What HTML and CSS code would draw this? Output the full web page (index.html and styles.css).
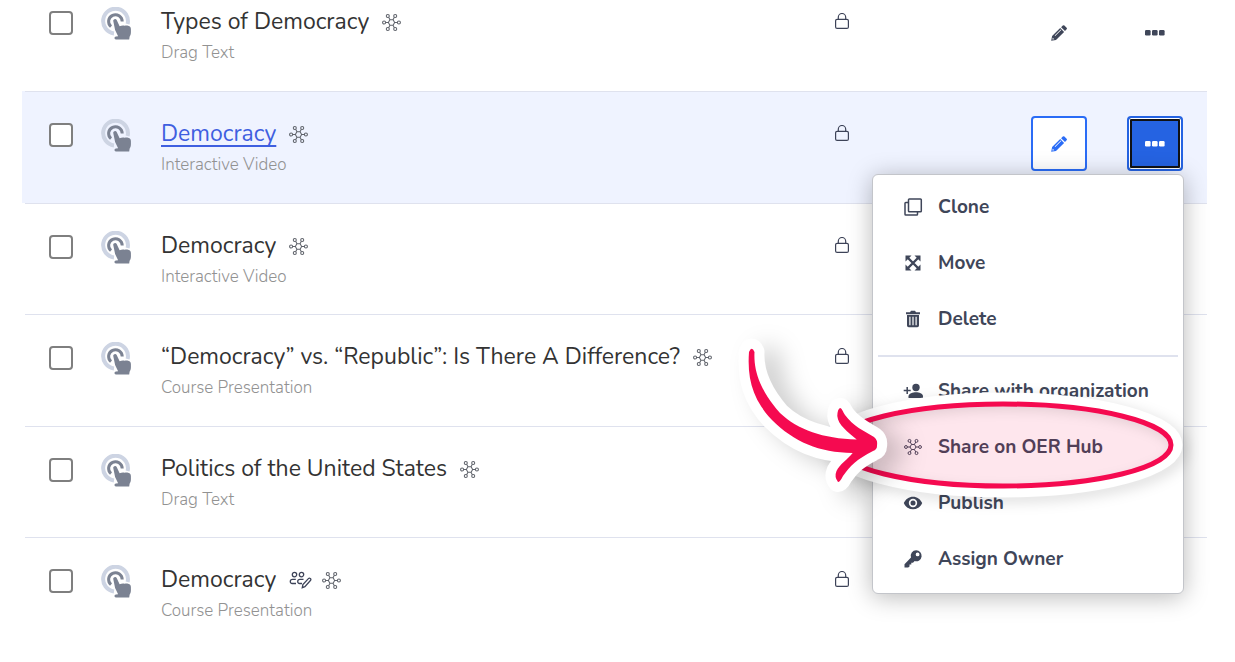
FILE: index.html
```html
<!DOCTYPE html>
<html lang="en">
<head>
    <meta charset="UTF-8">
    <meta name="viewport" content="width=device-width, initial-scale=1.0">
    <title>Content</title>
    <link rel="stylesheet" href="styles.css">
</head>
<body>
    <!-- Shared icons -->
    <svg class="sprite" aria-hidden="true">
        <symbol id="touch" viewBox="0 0 32 34">
            <path d="M13 26.4A12.4 12.4 0 1 1 26.6 17" fill="none" stroke="#cdd4e3" stroke-width="4"/>
            <path d="M10 19.7A6.8 6.8 0 1 1 21.2 14.6" fill="none" stroke="#7b8292" stroke-width="3"/>
            <path d="M12.3 14.2c-.6-2 2.5-3.200 3.400-1.200l2.900 6.200c2-.7 3.600-.9 5-.4 2.300-.5 6.300-.3 6.300 3.200 0 3.600.4 5.400-1.300 7.800l-.4 2.800H14.900c-1.900-.3-1.900-2.700 0-3l2.200-.3-3-6.300z" fill="#7b8292"/>
        </symbol>
        <symbol id="hub" viewBox="0 0 20 20">
            <g fill="none" stroke="currentColor" stroke-width="1.1">
                <path d="M3.800 10h3M13.200 10h3M6.900 4.500l1.600 2.700M13.100 4.500l-1.600 2.700M6.900 15.500l1.600-2.700M13.100 15.500l-1.600-2.700"/>
                <path d="M8.300 7.200h3.400L13.300 10l-1.600 2.800H8.300L6.700 10z"/>
                <circle cx="2.200" cy="10" r="1.600"/>
                <circle cx="17.800" cy="10" r="1.600"/>
                <circle cx="6.100" cy="3.200" r="1.600"/>
                <circle cx="13.900" cy="3.200" r="1.600"/>
                <circle cx="6.100" cy="16.800" r="1.600"/>
                <circle cx="13.900" cy="16.800" r="1.600"/>
            </g>
        </symbol>
        <symbol id="lock" viewBox="0 0 14 16">
            <path d="M3.300 6.300V4.200a3.700 3.700 0 0 1 7.400 0v2.100" fill="none" stroke="currentColor" stroke-width="1.200"/>
            <rect x=".6" y="6.300" width="12.800" height="9.100" rx="1.500" fill="none" stroke="currentColor" stroke-width="1.200"/>
        </symbol>
        <symbol id="pencil" viewBox="0 0 16 16">
            <path fill-rule="evenodd" d="M.2 15.800l.9-4.800 8.100-8 3.900 3.900-8.100 8zM1.700 12.700l-.3 1.900 1.900-.3zM3.700 10.500l.5.500 6-5.900-.5-.5z" fill="currentColor"/>
            <path d="M10.100 2.200l1.700-1.600q.8-.8 1.600 0l2.200 2.200q.7.700 0 1.500L14 6z" fill="currentColor"/>
        </symbol>
        <symbol id="dots" viewBox="0 0 20 6">
            <rect x="0" y="0" width="5.600" height="5.400" rx="1.200" fill="currentColor"/>
            <rect x="7" y="0" width="5.600" height="5.400" rx="1.200" fill="currentColor"/>
            <rect x="14" y="0" width="5.600" height="5.400" rx="1.200" fill="currentColor"/>
        </symbol>
        <symbol id="collab" viewBox="0 0 24 18">
            <g fill="none" stroke="currentColor" stroke-width="1.300">
                <circle cx="5.500" cy="3.600" r="2.200"/>
                <circle cx="12.500" cy="3.600" r="2.200"/>
                <path d="M7 12.500H3.200C.6 12.500.6 8.300 3.500 8.300h3.300M13 12.500h-2.300C8 12.500 8 8.300 11 8.300h3.500"/>
                <path d="M13.300 16.700l.6-3.200 5.500-5.900q1-1 2 0 1 .9 0 1.900l-5.500 6.100z"/>
            </g>
        </symbol>
    </svg>

    <main class="page">
        <table class="content-table">
            <tbody>
                <tr class="first">
                    <td class="check"><input type="checkbox" aria-label="Select Types of Democracy"></td>
                    <td class="type"><svg class="touch-icon"><use href="#touch"/></svg></td>
                    <td class="info">
                        <div class="title"><span>Types of Democracy</span><svg class="hub-icon"><use href="#hub"/></svg></div>
                        <div class="subtitle">Drag Text</div>
                    </td>
                    <td class="access"><svg class="lock-icon"><use href="#lock"/></svg></td>
                    <td class="actions">
                        <div class="buttons">
                            <button type="button" class="action-button" aria-label="Edit"><svg class="pencil-icon"><use href="#pencil"/></svg></button>
                            <button type="button" class="action-button" aria-label="More"><svg class="dots-icon"><use href="#dots"/></svg></button>
                        </div>
                    </td>
                </tr>
                <tr class="selected">
                    <td class="check"><input type="checkbox" aria-label="Select Democracy"></td>
                    <td class="type"><svg class="touch-icon"><use href="#touch"/></svg></td>
                    <td class="info">
                        <div class="title"><a href="#">Democracy</a><svg class="hub-icon"><use href="#hub"/></svg></div>
                        <div class="subtitle">Interactive Video</div>
                    </td>
                    <td class="access"><svg class="lock-icon"><use href="#lock"/></svg></td>
                    <td class="actions">
                        <div class="buttons">
                            <button type="button" class="action-button edit" aria-label="Edit"><svg class="pencil-icon"><use href="#pencil"/></svg></button>
                            <button type="button" class="action-button open" aria-label="More" aria-expanded="true"><svg class="dots-icon"><use href="#dots"/></svg></button>

                            <div class="menu">
                                <button type="button" class="menu-item">
                                    <svg viewBox="0 0 20 20" fill="none" stroke="currentColor" stroke-width="1.500"><rect x="5.500" y="2" width="12.800" height="12.800" rx=".8"/><path d="M5.500 5.500H2.800q-.8 0-.8.800v10.900q0 .8.800.8h10.900q.8 0 .8-.8v-2.400"/></svg>
                                    Clone
                                </button>
                                <button type="button" class="menu-item">
                                    <svg viewBox="0 0 20 20"><path d="M5 5l10 10M15 5L5 15" stroke="currentColor" stroke-width="2.400"/><path d="M2.500 2.500h6l-6 6zM17.500 2.500v6l-6-6zM2.500 17.500v-6l6 6zM17.500 17.500h-6l6-6z" fill="currentColor"/></svg>
                                    Move
                                </button>
                                <button type="button" class="menu-item">
                                    <svg viewBox="0 0 20 20"><path d="M3 3.200h4l1-1.400h4l1 1.400h4v2H3z" fill="currentColor"/><path fill-rule="evenodd" d="M4 6h12v10.500q0 1.700-1.700 1.700H5.700Q4 18.200 4 16.500zM6.300 7.700v8.500h1.200V7.700zM9.400 7.700v8.500h1.200V7.700zM12.500 7.700v8.500h1.200V7.700z" fill="currentColor"/></svg>
                                    Delete
                                </button>
                                <hr class="divider">
                                <button type="button" class="menu-item">
                                    <svg viewBox="0 0 20 20" fill="currentColor"><circle cx="13" cy="6.500" r="3.700"/><path d="M5.500 17v-1.700c0-2.600 4.500-4 7.500-4s7 1.400 7 4V17z"/><path d="M4.200 6v7M.7 9.500h7" stroke="currentColor" stroke-width="1.500"/></svg>
                                    Share with organization
                                </button>
                                <button type="button" class="menu-item">
                                    <svg class="hub"><use href="#hub"/></svg>
                                    Share on OER Hub
                                </button>
                                <button type="button" class="menu-item">
                                    <svg viewBox="0 0 20 20"><path fill-rule="evenodd" d="M.8 10C2.600 6 6 3.700 10 3.700S17.400 6 19.200 10C17.400 14 14 16.300 10 16.300S2.600 14 .8 10zM10 5.800a4.200 4.200 0 1 0 0 8.400 4.200 4.200 0 0 0 0-8.400z" fill="currentColor"/><circle cx="10" cy="10" r="2.500" fill="currentColor"/></svg>
                                    Publish
                                </button>
                                <button type="button" class="menu-item">
                                    <svg viewBox="0 0 20 20"><path fill-rule="evenodd" d="M13.200 1.300a5.500 5.500 0 1 1-1.500 10.800L10 13.800H8.300v1.800H6.500v1.800l-1.300 1.200H1.500v-3.300l6.500-6.800A5.500 5.500 0 0 1 13.200 1.300zm1.400 2.200a1.900 1.900 0 1 0 0 3.800 1.900 1.900 0 0 0 0-3.800z" fill="currentColor"/></svg>
                                    Assign Owner
                                </button>

                                <!-- Callout: ring round the hub option, with an arrow to it -->
                                <svg class="callout" viewBox="0 0 460 180" aria-hidden="true">
                                    <ellipse class="tint" cx="268" cy="110" rx="168" ry="41"/>
                                    <ellipse class="halo" cx="268" cy="110" rx="174" ry="47"/>
                                    <ellipse class="ring" cx="268" cy="110" rx="168" ry="41"/>
                                    <path class="arrow" d="M14 17Q16.700 10.500 19.500 17C18.500 36 25 55 45 78C63 95 88 103.500 121.700 104.500C113 97 103 90 102.300 81Q102.500 74 105 73C107 73 108 77 110 80C118 91 129 96 139 102Q143 105 142 111Q142 114.500 138 116C122 124 115 131 108 141Q105 147 103 147Q99 142 101.500 136C105 129 112 125 117.700 118C84 117.500 59 107 37 85C18 65 12 44 14 17Z"/>
                                </svg>
                            </div>
                        </div>
                    </td>
                </tr>
                <tr>
                    <td class="check"><input type="checkbox" aria-label="Select Democracy"></td>
                    <td class="type"><svg class="touch-icon"><use href="#touch"/></svg></td>
                    <td class="info">
                        <div class="title"><span>Democracy</span><svg class="hub-icon"><use href="#hub"/></svg></div>
                        <div class="subtitle">Interactive Video</div>
                    </td>
                    <td class="access"><svg class="lock-icon"><use href="#lock"/></svg></td>
                    <td class="actions"></td>
                </tr>
                <tr>
                    <td class="check"><input type="checkbox" aria-label="Select Democracy vs. Republic"></td>
                    <td class="type"><svg class="touch-icon"><use href="#touch"/></svg></td>
                    <td class="info">
                        <div class="title"><span>“Democracy” vs. “Republic”: Is There A Difference?</span><svg class="hub-icon"><use href="#hub"/></svg></div>
                        <div class="subtitle">Course Presentation</div>
                    </td>
                    <td class="access"><svg class="lock-icon"><use href="#lock"/></svg></td>
                    <td class="actions"></td>
                </tr>
                <tr>
                    <td class="check"><input type="checkbox" aria-label="Select Politics of the United States"></td>
                    <td class="type"><svg class="touch-icon"><use href="#touch"/></svg></td>
                    <td class="info">
                        <div class="title"><span>Politics of the United States</span><svg class="hub-icon"><use href="#hub"/></svg></div>
                        <div class="subtitle">Drag Text</div>
                    </td>
                    <td class="access"><svg class="lock-icon"><use href="#lock"/></svg></td>
                    <td class="actions"></td>
                </tr>
                <tr>
                    <td class="check"><input type="checkbox" aria-label="Select Democracy"></td>
                    <td class="type"><svg class="touch-icon"><use href="#touch"/></svg></td>
                    <td class="info">
                        <div class="title"><span>Democracy</span><svg class="collab-icon"><use href="#collab"/></svg><svg class="hub-icon"><use href="#hub"/></svg></div>
                        <div class="subtitle">Course Presentation</div>
                    </td>
                    <td class="access"><svg class="lock-icon"><use href="#lock"/></svg></td>
                    <td class="actions"></td>
                </tr>
            </tbody>
        </table>
    </main>
</body>
</html>
```
FILE: styles.css
```css
* {
    margin: 0;
    padding: 0;
    box-sizing: border-box;
}

body {
    background: #fff;
    color: #333;
    font-family: Nunito, 'Open Sans', sans-serif;
}

svg {
    display: block;
    flex: none;
}

.sprite {
    position: absolute;
    width: 0;
    height: 0;
}

.page {
    padding: 0 28px 0 25px;
}

.content-table {
    width: 100%;
    border-spacing: 0;
}

.content-table td {
    height: 112px;
    padding-top: 25px;
    border-top: 1px solid #dfe2ee;
    vertical-align: top;
}

.content-table tr:nth-child(odd) td {
    height: 111px;
}

.content-table tr.first td {
    height: 91px;
    padding-top: 5px;
    border-top: none;
}

.selected td {
    background: #eff3ff;
}

.selected .check {
    box-shadow: -3px 0 #eff3ff;
}

.content-table .check {
    width: 76px;
    padding-left: 24px;
}

.check input {
    display: block;
    appearance: none;
    width: 24px;
    height: 24px;
    margin-top: 6px;
    background: #fff;
    border: 2px solid #7f7f7f;
    border-radius: 4px;
}

.type {
    width: 60px;
}

.touch-icon {
    width: 32px;
    height: 34px;
    margin-top: 2px;
}

.title {
    display: flex;
    align-items: center;
    gap: 13px;
    font-size: 23px;
    font-weight: 400;
    line-height: 34px;
}

.title a {
    color: #3f5fe0;
    text-decoration-thickness: 2px;
    text-underline-offset: 4px;
}

.subtitle {
    color: #929292;
    font-size: 17px;
    font-weight: 300;
    line-height: 28px;
}

.hub-icon {
    width: 19px;
    height: 19px;
    color: #5f636b;
}

.collab-icon {
    width: 24px;
    height: 18px;
    color: #3d4358;
}

.collab-icon + .hub-icon {
    margin-left: -4px;
}

.access {
    width: 196px;
}

.lock-icon {
    width: 14px;
    height: 16px;
    margin-top: 8px;
    color: #3d4358;
}

.content-table .actions {
    width: 176px;
    padding-top: 24px;
}

.buttons {
    position: relative;
    display: flex;
    gap: 40px;
    width: 152px;
}

.action-button {
    display: flex;
    align-items: center;
    justify-content: center;
    width: 56px;
    height: 55px;
    background: none;
    border: none;
    border-radius: 4px;
    color: #3f4659;
    cursor: pointer;
}

.action-button.edit {
    background: #fff;
    border: 2px solid #2a6cf6;
    color: #2a6cf6;
}

.action-button.open {
    background: #2563e2;
    border: 2px solid #2563e2;
    box-shadow: inset 0 0 0 1px #fff, inset 0 0 0 3px #101114;
    color: #fff;
}

.pencil-icon {
    width: 16px;
    height: 16px;
}

.dots-icon {
    width: 20px;
    height: 6px;
}

.menu {
    position: absolute;
    top: 58px;
    right: -1px;
    z-index: 1;
    width: 312px;
    padding: 4px 5px 6px;
    background: #fff;
    border: 1px solid #c3c5ca;
    border-radius: 6px;
    box-shadow: 0 3px 24px rgba(0, 0, 0, 0.28);
}

.menu-item {
    display: flex;
    align-items: center;
    gap: 15px;
    width: 100%;
    height: 56px;
    padding-left: 25px;
    background: none;
    border: none;
    color: #3f4659;
    font-family: inherit;
    font-size: 19px;
    font-weight: 700;
    white-space: nowrap;
    cursor: pointer;
}

.menu-item svg {
    width: 20px;
    height: 20px;
}

.menu-item .hub {
    width: 18px;
    height: 18px;
    margin: 0 1px;
}

.divider {
    height: 2px;
    margin: 8px 0 6px;
    background: #dfe2ee;
    border: none;
}

.callout {
    position: absolute;
    top: 160px;
    left: -138px;
    width: 460px;
    height: 180px;
    overflow: visible;
    pointer-events: none;
}

.tint {
    fill: #f50a50;
    fill-opacity: 0.1;
}

.halo {
    fill: none;
    stroke: #fff;
    stroke-width: 11;
    filter: drop-shadow(4px 4px 7px rgba(0, 0, 0, 0.15));
}

.ring {
    fill: none;
    stroke: #f50a50;
    stroke-width: 5;
}

.arrow {
    fill: #f50a50;
    stroke: #fff;
    stroke-width: 20;
    stroke-linejoin: round;
    paint-order: stroke;
    filter: drop-shadow(16px 8px 12px rgba(0, 0, 0, 0.2));
}
```
